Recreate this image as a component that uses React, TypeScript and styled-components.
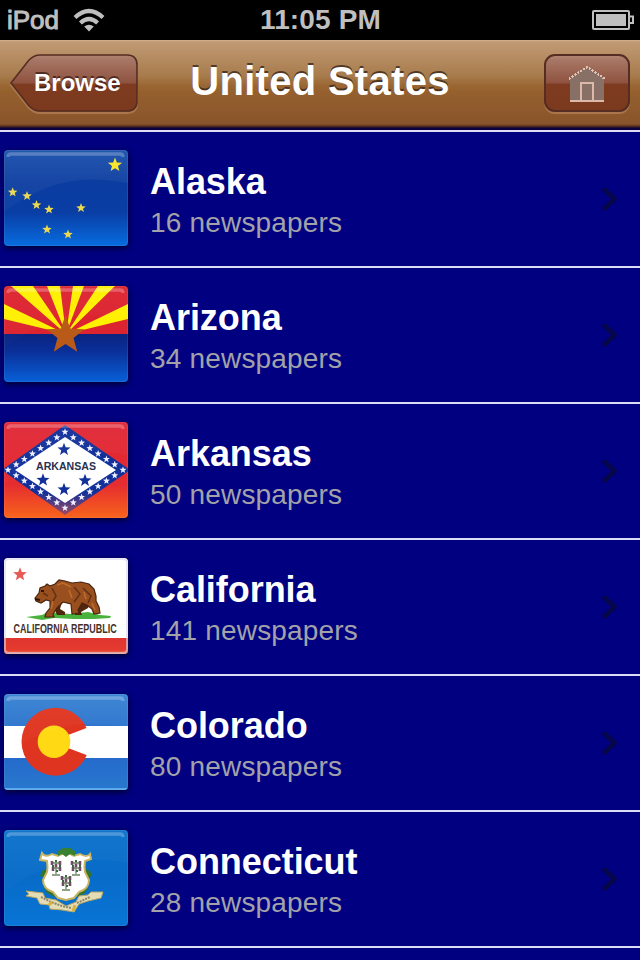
import React, { FC, ReactNode } from "react";
import styled, { createGlobalStyle } from "styled-components";

const GlobalStyle = createGlobalStyle`
  * {
    box-sizing: border-box;
  }
  body {
    margin: 0;
    background: #000080;
    font-family: "Liberation Sans", Arial, sans-serif;
  }
`;

const Screen = styled.div`
  display: flex;
  flex-direction: column;
  width: 640px;
  height: 960px;
  overflow: hidden;
  background: #000080;
`;

const StatusBar = styled.header`
  display: grid;
  grid-template-columns: 1fr auto 1fr;
  align-items: center;
  flex: none;
  height: 40px;
  padding: 0 6px 0 7px;
  background: #000;
  color: #bfbfbf;
`;

const Carrier = styled.div`
  display: flex;
  align-items: center;
  gap: 14px;
  height: 38px;
  font-size: 26px;
  line-height: 36px;
  -webkit-text-stroke: 1px #bfbfbf;
`;

const Clock = styled.div`
  font-size: 28px;
  font-weight: bold;
  line-height: 40px;
  letter-spacing: 0.15px;
`;

const BatterySvg = styled.svg`
  justify-self: end;
`;

const NavBar = styled.nav`
  display: grid;
  grid-template-columns: 128px 1fr 128px;
  align-items: start;
  flex: none;
  height: 90px;
  padding: 14px 10px 0;
  background: linear-gradient(
    #d6b08a 0,
    #c09a75 2px,
    #b88f66 14px,
    #a77b4c 36px,
    #996633 46px,
    #95602e 52px,
    #8a542b 84px,
    #754321 85px,
    #3c2020 87px,
    #0a0042 88px,
    #0a0042 90px
  );
`;

const NavTitle = styled.h1`
  margin: 0;
  color: #fff;
  font-size: 40px;
  line-height: 54px;
  letter-spacing: 0.3px;
  text-align: center;
  text-shadow: 0 -2px 0 rgba(50, 35, 25, 0.75);
  white-space: nowrap;
`;

const BackButton = styled.button`
  display: grid;
  width: 128px;
  height: 60px;
  padding: 0;
  border: 0;
  background: none;
  > * {
    grid-area: 1 / 1;
  }
`;

const BackLabel = styled.span`
  z-index: 1;
  padding-left: 24px;
  color: #fff;
  font: bold 24px/58px "Liberation Sans", Arial, sans-serif;
  text-align: left;
  text-shadow: 0 -2px 0 rgba(50, 20, 15, 0.7);
`;

const HomeButton = styled.button`
  display: flex;
  align-items: flex-start;
  justify-content: center;
  justify-self: end;
  width: 86px;
  height: 58px;
  padding: 10px 0 0;
  border: 2px solid #552d22;
  border-radius: 11px;
  background: linear-gradient(#b18370 0, #a77765 4px, #8f5240 27px, #7e3b20 28px, #7b391e 100%);
  box-shadow: 0 2px 0 rgba(210, 165, 130, 0.4);
`;

const List = styled.ul`
  margin: 0;
  padding: 0;
  border-top: 2px solid #dcdcf4;
  list-style: none;
`;

const Row = styled.li`
  display: grid;
  grid-template-columns: 124px 1fr 20px;
  column-gap: 22px;
  align-items: start;
  height: 136px;
  padding: 18px 20px 0 4px;
  border-bottom: 2px solid #dcdcf4;
`;

const Flag = styled.div`
  width: 124px;
  height: 96px;
  border-radius: 4px;
  box-shadow: 0 2px 5px 1px rgba(0, 0, 40, 0.75);
  overflow: hidden;
  svg {
    display: block;
  }
`;

const RowText = styled.div`
  padding-top: 11px;
`;

const StateName = styled.div`
  color: #fff;
  font-size: 36px;
  font-weight: bold;
  line-height: 42px;
  letter-spacing: -0.05px;
`;

const PaperCount = styled.div`
  color: #a2a2a8;
  font-size: 28px;
  line-height: 40px;
  letter-spacing: 0.18px;
`;

const ChevronSvg = styled.svg`
  margin-top: 35px;
`;

const starPoints = (cx: number, cy: number, r: number) =>
  Array.from({ length: 10 }, (_, i) => {
    const radius = i % 2 ? r * 0.42 : r;
    const angle = (Math.PI / 5) * i - Math.PI / 2;
    return `${(cx + radius * Math.cos(angle)).toFixed(2)},${(cy + radius * Math.sin(angle)).toFixed(2)}`;
  }).join(" ");

const Star: FC<{ x: number; y: number; r: number; fill: string }> = ({ x, y, r, fill }) => (
  <polygon points={starPoints(x, y, r)} fill={fill} />
);

type FlagArtProps = { id: string; gloss?: number; children: ReactNode };

// Every flag shares the glass highlight and the lighter rim
const FlagArt: FC<FlagArtProps> = ({ id, gloss = 0.07, children }) => (
  <svg width="124" height="96" viewBox="0 0 124 96">
    <defs>
      <linearGradient id={`${id}-gloss`} x1="0" y1="0" x2="0" y2="1">
        <stop offset="0" stopColor="#fff" stopOpacity={gloss * 1.1} />
        <stop offset="1" stopColor="#fff" stopOpacity={gloss * 0.3} />
      </linearGradient>
    </defs>
    {children}
    <path d="M0 0H124V33Q76 24 42 38Q20 47 0 62Z" fill={`url(#${id}-gloss)`} />
    <path d="M4 7Q4 4 7 4H116Q119 4 119 7" fill="none" stroke="#fff" strokeOpacity="0.25" strokeWidth="3.4" />
    <rect x="0.5" y="0.5" width="123" height="95" rx="4" fill="none" stroke="#fff" strokeOpacity="0.08" />
  </svg>
);

const alaskaStars = [
  [8.7, 42.3],
  [23, 46],
  [32.5, 55],
  [45, 59.5],
  [77, 58],
  [43, 79.5],
  [64, 84.5],
];

const AlaskaFlag = () => (
  <FlagArt id="ak">
    <defs>
      <linearGradient id="ak-bg" x1="0" y1="0" x2="0" y2="1">
        <stop offset="0" stopColor="#1049a8" />
        <stop offset="0.35" stopColor="#0b3ca0" />
        <stop offset="0.65" stopColor="#093ea5" />
        <stop offset="1" stopColor="#086cdf" />
      </linearGradient>
    </defs>
    <rect width="124" height="96" fill="url(#ak-bg)" />
    <Star x={111} y={15} r={7.5} fill="#fae51e" />
    {alaskaStars.map(([x, y]) => (
      <Star key={x} x={x} y={y} r={5} fill="#ecd94e" />
    ))}
  </FlagArt>
);

const ArizonaFlag = () => (
  <FlagArt id="az" gloss={0.03}>
    <defs>
      <linearGradient id="az-bg" x1="0" y1="0" x2="0" y2="1">
        <stop offset="0" stopColor="#0a2380" />
        <stop offset="0.35" stopColor="#0a2f98" />
        <stop offset="1" stopColor="#0860d8" />
      </linearGradient>
    </defs>
    <rect width="124" height="48" fill="#dc2430" />
    <rect y="48" width="124" height="48" fill="url(#az-bg)" />
    <path
      d="M62 48L0 33V18ZM62 48L7 0H29ZM62 48L43 0H56ZM62 48L69 0H80ZM62 48L94 0H111ZM62 48L124 18V33Z"
      fill="#fff000"
    />
    <Star x={61.5} y={49.5} r={20} fill="#b95a18" />
  </FlagArt>
);

const diamondDots = [0, 1, 2, 3, 4, 5, 6].flatMap((i) => {
  const t = i / 7;
  return [
    [4 + 57 * t, 48 - 38 * t],
    [61 + 58 * t, 10 + 38 * t],
    [119 - 58 * t, 48 + 38 * t],
    [61 - 57 * t, 86 - 38 * t],
  ];
});

const ArkansasFlag = () => (
  <FlagArt id="ar" gloss={0.04}>
    <defs>
      <linearGradient id="ar-bg" x1="0" y1="0" x2="0" y2="1">
        <stop offset="0" stopColor="#df2535" />
        <stop offset="0.65" stopColor="#e52c30" />
        <stop offset="1" stopColor="#f8641c" />
      </linearGradient>
      <linearGradient id="ar-edge" x1="0" y1="0" x2="0" y2="1">
        <stop offset="0.75" stopColor="#12309a" />
        <stop offset="1" stopColor="#a34960" />
      </linearGradient>
    </defs>
    <rect width="124" height="96" fill="url(#ar-bg)" />
    <path d="M-2 48L61 3L126 48L61 93Z" fill="url(#ar-edge)" />
    <path d="M11 48L61 15L112 48L61 81Z" fill="#fff" />
    {diamondDots.map(([x, y]) => (
      <Star key={`${x}-${y}`} x={x} y={y} r={3.7} fill="#eef0ff" />
    ))}
    <Star x={60} y={27.5} r={6.8} fill="#12309a" />
    <Star x={39} y={58} r={6.8} fill="#12309a" />
    <Star x={81} y={58.5} r={6.8} fill="#12309a" />
    <Star x={60} y={67.5} r={6.8} fill="#12309a" />
    <text
      x="32"
      y="48"
      textLength="60"
      lengthAdjust="spacingAndGlyphs"
      fontSize="10.5"
      fontWeight="bold"
      fill="#29304f"
      fontFamily="Liberation Sans, Arial, sans-serif"
    >
      ARKANSAS
    </text>
  </FlagArt>
);

const CaliforniaFlag = () => (
  <FlagArt id="ca" gloss={0}>
    <defs>
      <linearGradient id="ca-bar" x1="0" y1="0" x2="0" y2="1">
        <stop offset="0" stopColor="#df3530" />
        <stop offset="0.75" stopColor="#e53a2e" />
        <stop offset="1" stopColor="#ed7d52" />
      </linearGradient>
    </defs>
    <rect width="124" height="96" fill="#fff" />
    <rect y="80" width="124" height="16" fill="url(#ca-bar)" />
    <rect x="1" y="1" width="122" height="94" rx="4" fill="none" stroke="#d9d5ee" strokeOpacity="0.6" strokeWidth="2" />
    <Star x={16} y={16.5} r={7.2} fill="#e85a55" />
    <path d="M22 59L38 57L44 54L66 56L84 54L96 57L107 58L106 60L90 61H70L50 60L38 62Z" fill="#48b23c" />
    {/* far legs */}
    <path d="M51 42L58 44L56 51L61 54V57H53L50 50ZM76 42L86 44L84 50L77 54L78 57H71L72 50Z" fill="#51260f" />
    <path
      d="M31 40L35 35L36 30L41 28L43 26L46 28L51 26L55 22L61 23L68 25L77 24L85 26L90 31L92 38L92 43L95 49L96 55L90 56L88 51L83 47L78 45L74 52L75 55L68 56L67 46L59 44L53 50L49 56L50 59L41 59L42 55L46 50V43L42 42L37 45L32 43Z"
      fill="#99501e"
      stroke="#4a250f"
      strokeWidth="1.2"
    />
    <path
      d="M48 30L52 38L48 45M70 29L76 36L70 44M79 30L87 38L84 45M39 35L44 38"
      fill="none"
      stroke="#633214"
      strokeWidth="1.6"
    />
    <path d="M53 27L59 25L67 29M65 32L68 40M80 34L82 41M49 43L47 51M88 45L91 52" fill="none" stroke="#bd6c2d" strokeWidth="1.6" />
    <path d="M37 33H40M31 41L36 42" stroke="#2b160c" strokeWidth="2" />
    <text
      transform="translate(9.5 75.3) scale(0.69 1)"
      fontSize="13"
      fontWeight="bold"
      fill="#44302b"
      fontFamily="Liberation Sans, Arial, sans-serif"
    >
      CALIFORNIA REPUBLIC
    </text>
  </FlagArt>
);

const ColoradoFlag = () => (
  <FlagArt id="co" gloss={0.04}>
    <defs>
      <linearGradient id="co-bg" x1="0" y1="0" x2="0" y2="1">
        <stop offset="0" stopColor="#3681d2" />
        <stop offset="0.65" stopColor="#256acb" />
        <stop offset="1" stopColor="#2878ce" />
      </linearGradient>
    </defs>
    <rect width="124" height="96" fill="url(#co-bg)" />
    <rect y="32" width="124" height="32" fill="#fff" />
    <circle cx="51.5" cy="47.7" r="34" fill="#df3520" />
    <path d="M64 41L82.5 34L88 32V64L82.5 61L64 54Z" fill="#fff" />
    <circle cx="50" cy="47.7" r="16.3" fill="#ffda14" />
    <path d="M0 95H124" stroke="#5ba7ec" strokeWidth="2" />
  </FlagArt>
);

const grapevines = [
  [52, 36],
  [72, 36],
  [62, 51],
];

const ConnecticutFlag = () => (
  <FlagArt id="ct" gloss={0.04}>
    <defs>
      <linearGradient id="ct-bg" x1="0" y1="0" x2="0" y2="1">
        <stop offset="0" stopColor="#0870ca" />
        <stop offset="0.5" stopColor="#086bc8" />
        <stop offset="1" stopColor="#0875d6" />
      </linearGradient>
    </defs>
    <rect width="124" height="96" fill="url(#ct-bg)" />
    <path d="M38 41L47 37V51L42 48L36 46ZM86 41L77 37V51L82 48L88 46ZM40 58L53 61L51 67L43 63ZM84 58L71 61L73 67L81 63Z" fill="#34742d" />
    <path
      d="M38 23Q41 28 48 24L54 26Q62 21 70 26L76 24Q83 28 86 24L87 29L81 31Q80 37 81 42L85 50Q85 59 75 62L70 68L62 70L54 68L49 62Q39 59 39 50L43 42Q44 37 43 31L36 30Z"
      fill="#fff"
      stroke="#c8b45e"
      strokeWidth="2"
    />
    <path d="M54 26V21L59 18H66L71 21V26L66 24L62 27L58 24Z" fill="#317c2b" />
    {grapevines.map(([x, y]) => (
      <g key={`${x}-${y}`}>
        <path
          d={`M${x} ${y - 6}V${y + 8}M${x - 4} ${y - 3}H${x + 4}M${x - 4} ${y + 2}H${x + 4}M${x - 4} ${y + 9}H${x + 4}`}
          stroke="#6c8560"
          strokeWidth="1.3"
        />
        <path
          d={`M${x - 4} ${y - 5}v4M${x + 4} ${y - 5}v4M${x - 3} ${y + 1}v4M${x + 4} ${y + 1}v4M${x} ${y - 2}v3`}
          stroke="#704d67"
          strokeWidth="2.6"
        />
        <path d={`M${x - 4} ${y}h2M${x + 3} ${y}h2M${x - 1} ${y - 5}h2M${x} ${y + 5}h2`} stroke="#386938" strokeWidth="2" />
      </g>
    ))}
    <path
      d="M22 61L39 63L41 68L52 70L62 76L72 72L75 66L84 65L87 62L99 62L97 68L84 71L75 74L70 82L58 80L46 79L45 75L36 74L33 68L22 66L25 64Z"
      fill="#e4dcb5"
      stroke="#b5a767"
    />
    <path d="M37 67L47 72L58 76L67 78M73 73L86 67" fill="none" stroke="#8d8768" strokeWidth="2" strokeDasharray="2 1" />
    <path d="M45 75L48 72M69 81L71 75" stroke="#d9b33b" strokeWidth="3" />
  </FlagArt>
);

const WifiIcon = () => (
  <svg width="32" height="24" viewBox="0 0 32 24">
    <g fill="none" stroke="#bfbfbf" strokeWidth="4.2">
      <path d="M2 9.5Q16 -3.5 30 9.5" />
      <path d="M7.4 15Q16 7 24.6 15" />
    </g>
    <path d="M11.2 18.6Q16 14.8 20.8 18.6L16 23.4Z" fill="#bfbfbf" />
  </svg>
);

const BatteryIcon = () => (
  <BatterySvg width="42" height="20" viewBox="0 0 42 20">
    <rect x="1" y="1" width="36" height="18" rx="1" fill="none" stroke="#bfbfbf" strokeWidth="2" />
    <rect x="4" y="4" width="30" height="12" fill="#bfbfbf" />
    <path d="M37 6.5H41V13H37" fill="none" stroke="#bfbfbf" strokeWidth="2" />
  </BatterySvg>
);

const BackShape = () => (
  <svg width="128" height="60" viewBox="0 0 128 60">
    <defs>
      <linearGradient id="back-fill" x1="0" y1="0" x2="0" y2="1">
        <stop offset="0" stopColor="#b18370" />
        <stop offset="0.08" stopColor="#a77765" />
        <stop offset="0.5" stopColor="#8f5240" />
        <stop offset="0.52" stopColor="#7e3b20" />
        <stop offset="1" stopColor="#7b391e" />
      </linearGradient>
    </defs>
    <path
      d="M1 31L19 8Q24 3 30 3H117Q127 3 127 13V49Q127 59 117 59H30Q24 59 19 54Z"
      fill="none"
      stroke="#d2a582"
      strokeOpacity="0.4"
      strokeWidth="2"
    />
    <path
      d="M1 29L19 6Q24 1 30 1H117Q127 1 127 11V47Q127 57 117 57H30Q24 57 19 52Z"
      fill="url(#back-fill)"
      stroke="#552d22"
      strokeWidth="1.6"
    />
  </svg>
);

const HomeIcon = () => (
  <svg width="38" height="37" viewBox="0 0 38 37" shapeRendering="crispEdges">
    <path d="M19 1L1 13H2V36H36V13H37Z" fill="#887067" />
    <path d="M1 13L19 1L37 13" fill="none" stroke="#dfc5b8" strokeWidth="2" strokeDasharray="2 1.4" />
    <path d="M2 35H36M13 35V17H25V35" fill="none" stroke="#dcb9a9" strokeWidth="1.7" />
  </svg>
);

const Chevron = () => (
  <ChevronSvg width="20" height="28" viewBox="0 0 20 28">
    <path d="M3.5 3.5L14.5 14L3.5 24.5" fill="none" stroke="#06064a" strokeWidth="4.6" />
  </ChevronSvg>
);

const states = [
  { name: "Alaska", papers: 16, flag: <AlaskaFlag /> },
  { name: "Arizona", papers: 34, flag: <ArizonaFlag /> },
  { name: "Arkansas", papers: 50, flag: <ArkansasFlag /> },
  { name: "California", papers: 141, flag: <CaliforniaFlag /> },
  { name: "Colorado", papers: 80, flag: <ColoradoFlag /> },
  { name: "Connecticut", papers: 28, flag: <ConnecticutFlag /> },
];

const App: FC = () => (
  <>
    <GlobalStyle />
    <Screen>
      <StatusBar>
        <Carrier>
          iPod <WifiIcon />
        </Carrier>
        <Clock>11:05 PM</Clock>
        <BatteryIcon />
      </StatusBar>
      <NavBar>
        <BackButton>
          <BackShape />
          <BackLabel>Browse</BackLabel>
        </BackButton>
        <NavTitle>United States</NavTitle>
        <HomeButton aria-label="Home">
          <HomeIcon />
        </HomeButton>
      </NavBar>
      <List>
        {states.map(({ name, papers, flag }) => (
          <Row key={name}>
            <Flag>{flag}</Flag>
            <RowText>
              <StateName>{name}</StateName>
              <PaperCount>{papers} newspapers</PaperCount>
            </RowText>
            <Chevron />
          </Row>
        ))}
      </List>
    </Screen>
  </>
);

export default App;
